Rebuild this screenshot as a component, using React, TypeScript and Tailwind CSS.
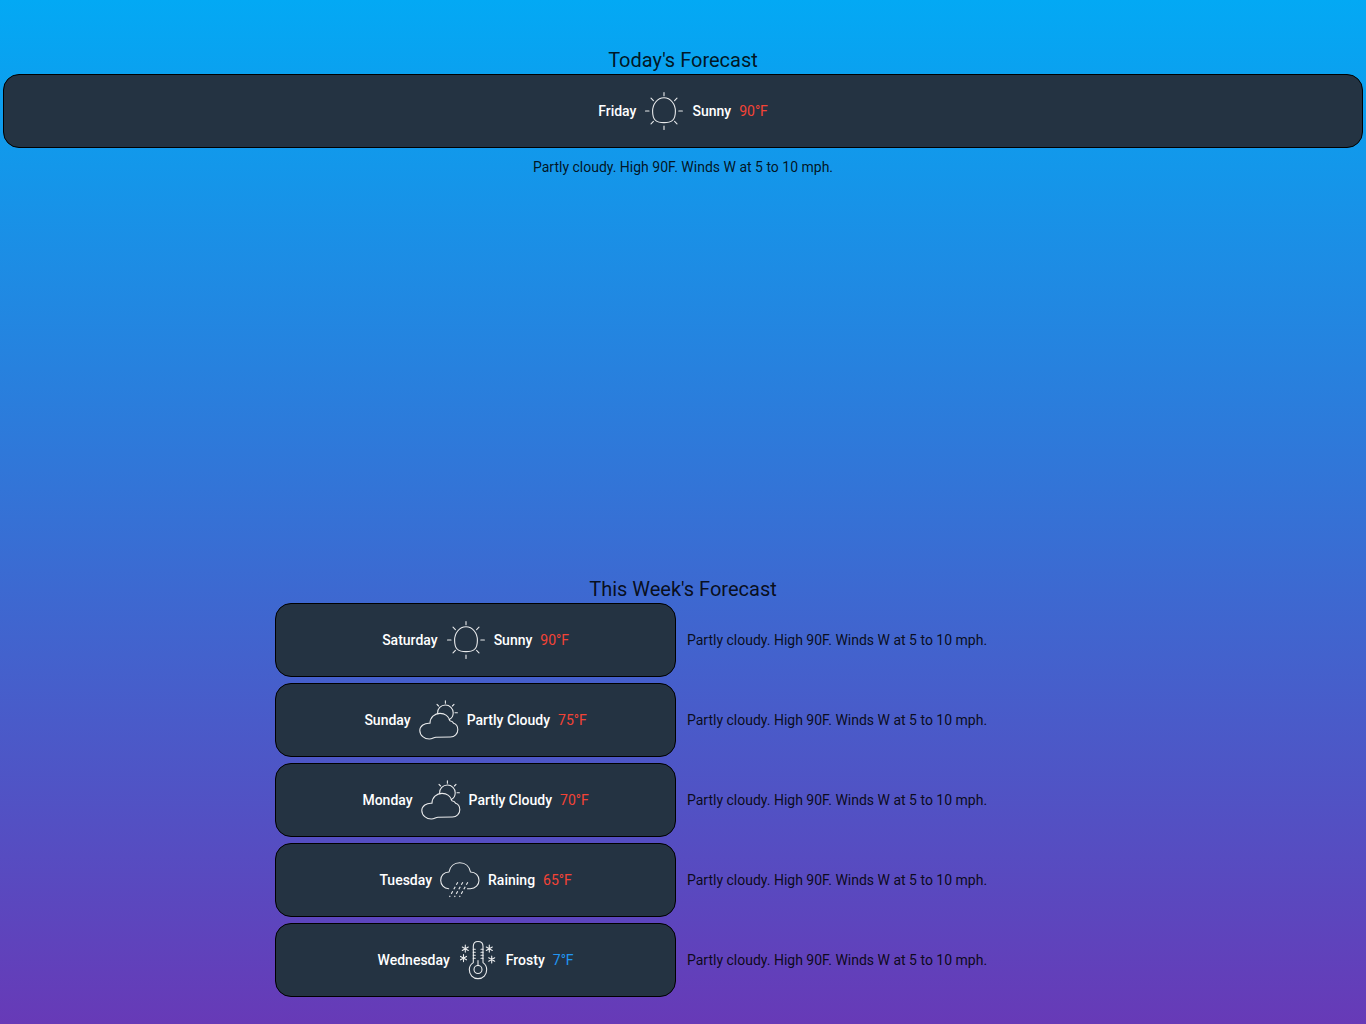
import type { ReactNode } from "react";

type Kind = "sunny" | "partly" | "rain" | "frost";

type Forecast = {
  day: string;
  icon: Kind;
  label: string;
  temp: number;
  details: string;
};

const DETAILS = "Partly cloudy. High 90F. Winds W at 5 to 10 mph.";

const today: Forecast = { day: "Friday", icon: "sunny", label: "Sunny", temp: 90, details: DETAILS };

const week: Forecast[] = [
  { day: "Saturday", icon: "sunny", label: "Sunny", temp: 90, details: DETAILS },
  { day: "Sunday", icon: "partly", label: "Partly Cloudy", temp: 75, details: DETAILS },
  { day: "Monday", icon: "partly", label: "Partly Cloudy", temp: 70, details: DETAILS },
  { day: "Tuesday", icon: "rain", label: "Raining", temp: 65, details: DETAILS },
  { day: "Wednesday", icon: "frost", label: "Frosty", temp: 7, details: DETAILS },
];

const drawings: Record<Kind, ReactNode> = {
  sunny: (
    <>
      <path d="M20 6.8C23.5 6.8 26.2 8.4 28.3 11C30.6 13.8 31.4 16.8 31.4 20.3C31.4 24 31 27.2 28.6 29.3C26.3 31.2 23.4 31.6 20 31.6C16.6 31.6 13.7 31.2 11.4 29.3C9 27.2 8.6 24 8.6 20.3C8.6 16.8 9.4 13.8 11.7 11C13.8 8.4 16.5 6.8 20 6.8Z" />
      <path d="M20 1.5v3.2M20 35v3.4M1.5 20h3.5M34.8 20h3.6M7 7.2l2.4 2.4M33 7.2l-2.4 2.4M7 32.8l2.4-2.4M33 32.8l-2.4-2.4" />
    </>
  ),
  partly: (
    <>
      <path d="M11 23.3C5.5 22.8 .8 26 .8 30.5C.8 35.5 5.5 39 10.3 39C13.5 39 14.5 37.5 17 37.3L31.5 37C35.6 37 38.8 34 38.8 29.8C38.8 26.5 37.2 24 34.6 23.2C34 21.5 32.6 20.9 30.8 20.7C29.8 16.5 26 13.4 21 13.4C15.5 13.4 11 17.5 11 23.3Z" />
      <path d="M18.6 13.2C18.2 8.6 22 5 26.4 5C30.8 5 34.2 8.6 34.2 12.7C34.2 16 32.6 18.4 30.2 19.4" />
      <path d="M26.4 .8v2.4M18 4.3l1.6 1.7M35 4.3l-1.6 1.7M36 12.7h2.4" />
    </>
  ),
  rain: (
    <>
      <path d="M8.7 28.7C4 28.5 .7 25 .7 20.3C.7 15.5 4 12 9 12C10 6.5 14 2.8 19.7 2.8C25.4 2.8 29.5 6.5 30.5 12C35.5 12 39 15.5 39 20.3C39 25 35.5 28.5 30.3 28.7H27.5" />
      <path strokeLinecap="butt" strokeDasharray="3 2.2" d="M17.8 22.2L9.5 37M22.8 22.2L14.5 37M27.8 22.2L19.5 37" />
    </>
  ),
  frost: (
    <>
      <path d="M15.3 22.6V6.3C15.3 3 17 1.5 20 1.5C23.4 1.5 25 3 25 6.3V22.6C27.4 24.2 28.7 26.5 28.7 29.5C28.7 34.8 25.2 38.6 20 38.6C14.9 38.6 11.3 34.8 11.3 29.5C11.3 26.5 12.8 24.2 15.3 22.6Z" />
      <circle cx="20" cy="29.5" r="4" />
      <path d="M20 20.5v5M15.3 9.3h2M15.3 12.3h2M15.3 15.3h2M15.3 18.3h2M25 9.3h-2M25 12.3h-2M25 15.3h-2M25 18.3h-2" />
      <path d="M7.3 5.1v7M4.3 7l6 3.4M10.3 7l-6 3.4M5.5 14.6v7M2.5 16.4l6 3.4M8.5 16.4l-6 3.4M31.3 5.1v7M28.3 7l6 3.4M34.3 7l-6 3.4M33.7 16v7M30.7 17.8l6 3.4M36.7 17.8l-6 3.4" />
    </>
  ),
};

function WeatherIcon({ kind }: { kind: Kind }) {
  return (
    <svg
      viewBox="0 0 40 40"
      className="size-10 shrink-0"
      fill="none"
      stroke="#ffffff"
      strokeWidth="1.1"
      strokeOpacity="0.9"
      strokeLinecap="round"
      strokeLinejoin="round"
      aria-hidden="true"
    >
      {drawings[kind]}
    </svg>
  );
}

function ForecastCard({ item }: { item: Forecast }) {
  return (
    <div className="flex items-center justify-center gap-2 rounded-2xl border border-black bg-[#243342] px-4 py-4 text-sm font-medium text-white">
      <span>{item.day}</span>
      <WeatherIcon kind={item.icon} />
      <span>{item.label}</span>
      <span className={item.temp > 32 ? "font-normal text-[#f44336]" : "font-normal text-[#2196f3]"}>
        {item.temp}°F
      </span>
    </div>
  );
}

export default function App() {
  return (
    <main className="flex min-h-screen flex-col justify-between gap-8 bg-linear-to-b/srgb from-[#03a9f4] to-[#673ab7] pt-[46px] pb-[27px] font-['Roboto',sans-serif] text-black/87">
      <section className="px-[3px] text-center">
        <h1 className="text-xl leading-7">Today's Forecast</h1>
        <ForecastCard item={today} />
        <p className="mt-[9px] text-sm">{today.details}</p>
      </section>
      <section>
        <h2 className="text-center text-xl leading-7">This Week's Forecast</h2>
        <ul className="mx-auto flex w-3/5 flex-col gap-1.5">
          {week.map((item) => (
            <li key={item.day} className="grid grid-cols-2 items-center">
              <div className="pr-[7px] pl-0.5">
                <ForecastCard item={item} />
              </div>
              <p className="pl-1 text-sm">{item.details}</p>
            </li>
          ))}
        </ul>
      </section>
    </main>
  );
}
